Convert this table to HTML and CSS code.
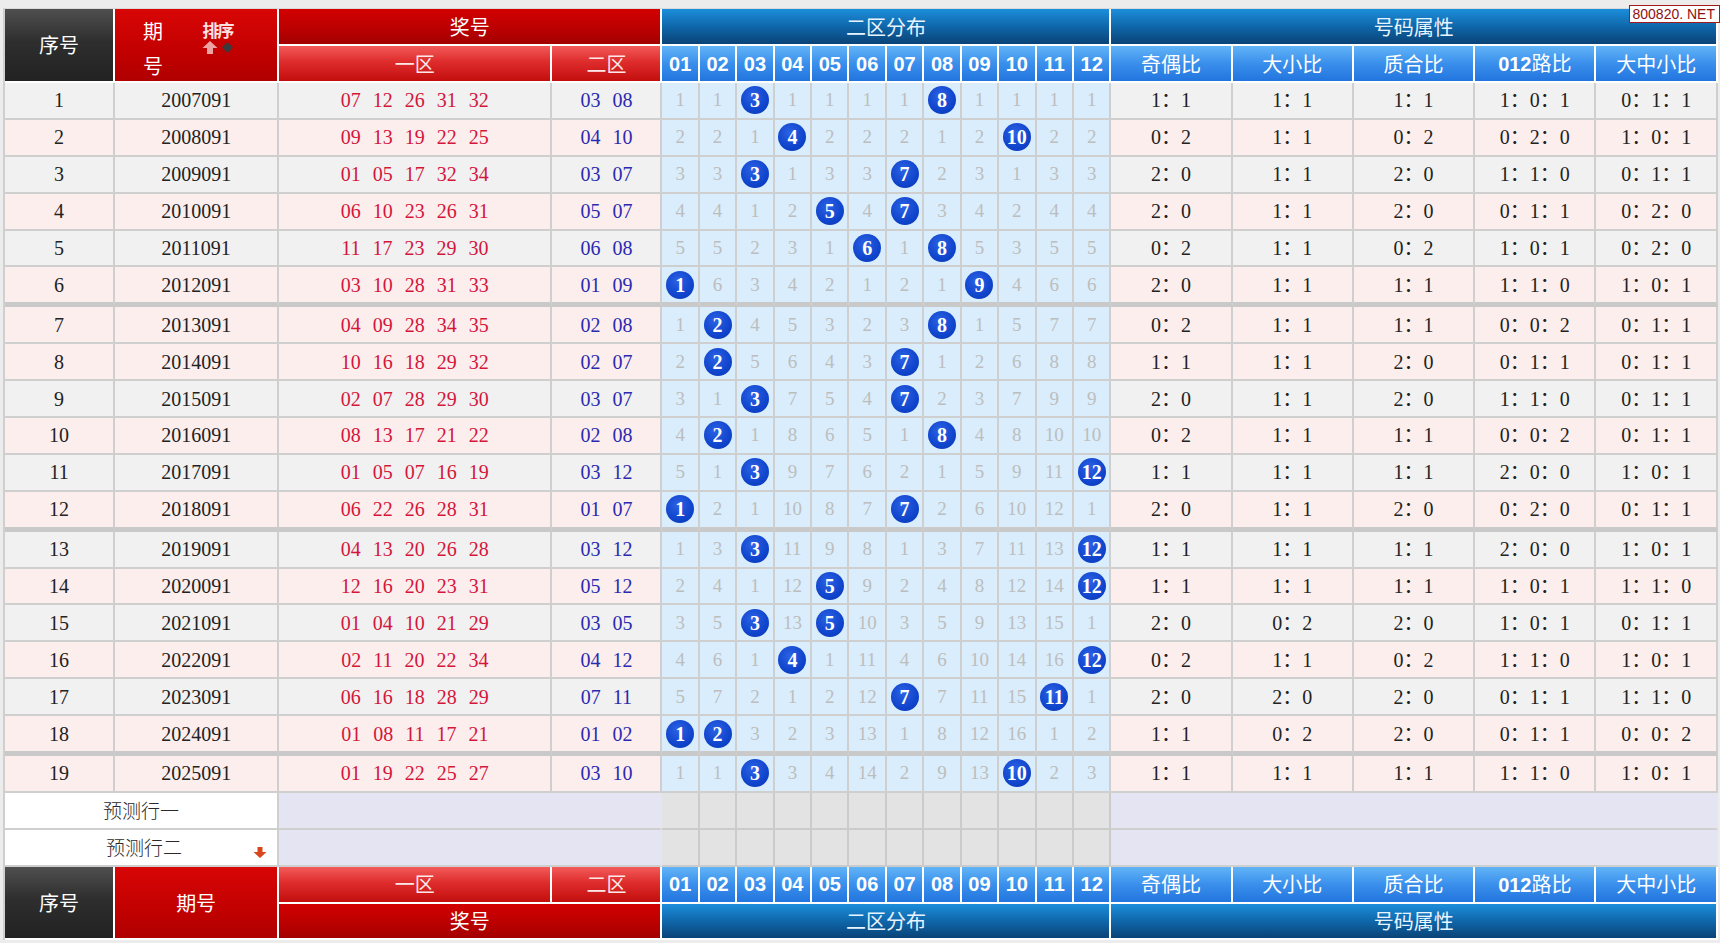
FILE: index.html
```html
<!DOCTYPE html>
<html lang="zh-CN">
<head>
<meta charset="utf-8">
<title>二区分布走势</title>
<link rel="stylesheet" href="styles.css">
</head>
<body>
<div class="badge">800820. NET</div>
<table class="chart">
<colgroup>
<col class="c-seq"><col class="c-issue"><col class="c-red"><col class="c-blue">
<col class="c-d"><col class="c-d"><col class="c-d"><col class="c-d"><col class="c-d"><col class="c-d"><col class="c-d"><col class="c-d"><col class="c-d"><col class="c-d"><col class="c-d"><col class="c-d">
<col class="c-a"><col class="c-a"><col class="c-a"><col class="c-a"><col class="c-a">
</colgroup>
<thead>
<tr>
<th rowspan="2" class="h-dark">序号</th>
<th rowspan="2" class="h-red"><div class="issue-in"><span class="qh">期<br>号</span><span class="sort"><b>排序</b><span class="arrows"><svg width="16" height="13" viewBox="0 0 16 13"><path d="M8 0 L15.5 7 H11 V13 H5 V7 H0.5 Z" fill="#eea3a3"/></svg><svg width="11" height="11" viewBox="0 0 10 10"><path d="M5 0 L10 5 L5 10 L0 5 Z" fill="#3b3b3b"/></svg></span></span></div></th>
<th colspan="2" class="h-dred">奖号</th>
<th colspan="12" class="h-dblue">二区分布</th>
<th colspan="5" class="h-dblue">号码属性</th>
</tr>
<tr>
<th class="h-lred">一区</th><th class="h-lred">二区</th>
<th class="h-lblue num">01</th><th class="h-lblue num">02</th><th class="h-lblue num">03</th><th class="h-lblue num">04</th><th class="h-lblue num">05</th><th class="h-lblue num">06</th><th class="h-lblue num">07</th><th class="h-lblue num">08</th><th class="h-lblue num">09</th><th class="h-lblue num">10</th><th class="h-lblue num">11</th><th class="h-lblue num">12</th>
<th class="h-lblue">奇偶比</th><th class="h-lblue">大小比</th><th class="h-lblue">质合比</th><th class="h-lblue"><span class="num">012</span>路比</th><th class="h-lblue">大中小比</th>
</tr>
</thead>
<tbody>
<tr class="g"><td>1</td><td>2007091</td><td class="rn">07 12 26 31 32</td><td class="bn">03 08</td>
<td class="m">1</td><td class="m">1</td><td class="m"><span class="ball">3</span></td><td class="m">1</td><td class="m">1</td><td class="m">1</td><td class="m">1</td><td class="m"><span class="ball">8</span></td><td class="m">1</td><td class="m">1</td><td class="m">1</td><td class="m">1</td>
<td>1：1</td><td>1：1</td><td>1：1</td><td>1：0：1</td><td>0：1：1</td></tr>
<tr class="p"><td>2</td><td>2008091</td><td class="rn">09 13 19 22 25</td><td class="bn">04 10</td>
<td class="m">2</td><td class="m">2</td><td class="m">1</td><td class="m"><span class="ball">4</span></td><td class="m">2</td><td class="m">2</td><td class="m">2</td><td class="m">1</td><td class="m">2</td><td class="m"><span class="ball">10</span></td><td class="m">2</td><td class="m">2</td>
<td>0：2</td><td>1：1</td><td>0：2</td><td>0：2：0</td><td>1：0：1</td></tr>
<tr class="g"><td>3</td><td>2009091</td><td class="rn">01 05 17 32 34</td><td class="bn">03 07</td>
<td class="m">3</td><td class="m">3</td><td class="m"><span class="ball">3</span></td><td class="m">1</td><td class="m">3</td><td class="m">3</td><td class="m"><span class="ball">7</span></td><td class="m">2</td><td class="m">3</td><td class="m">1</td><td class="m">3</td><td class="m">3</td>
<td>2：0</td><td>1：1</td><td>2：0</td><td>1：1：0</td><td>0：1：1</td></tr>
<tr class="p"><td>4</td><td>2010091</td><td class="rn">06 10 23 26 31</td><td class="bn">05 07</td>
<td class="m">4</td><td class="m">4</td><td class="m">1</td><td class="m">2</td><td class="m"><span class="ball">5</span></td><td class="m">4</td><td class="m"><span class="ball">7</span></td><td class="m">3</td><td class="m">4</td><td class="m">2</td><td class="m">4</td><td class="m">4</td>
<td>2：0</td><td>1：1</td><td>2：0</td><td>0：1：1</td><td>0：2：0</td></tr>
<tr class="g"><td>5</td><td>2011091</td><td class="rn">11 17 23 29 30</td><td class="bn">06 08</td>
<td class="m">5</td><td class="m">5</td><td class="m">2</td><td class="m">3</td><td class="m">1</td><td class="m"><span class="ball">6</span></td><td class="m">1</td><td class="m"><span class="ball">8</span></td><td class="m">5</td><td class="m">3</td><td class="m">5</td><td class="m">5</td>
<td>0：2</td><td>1：1</td><td>0：2</td><td>1：0：1</td><td>0：2：0</td></tr>
<tr class="p sep"><td>6</td><td>2012091</td><td class="rn">03 10 28 31 33</td><td class="bn">01 09</td>
<td class="m"><span class="ball">1</span></td><td class="m">6</td><td class="m">3</td><td class="m">4</td><td class="m">2</td><td class="m">1</td><td class="m">2</td><td class="m">1</td><td class="m"><span class="ball">9</span></td><td class="m">4</td><td class="m">6</td><td class="m">6</td>
<td>2：0</td><td>1：1</td><td>1：1</td><td>1：1：0</td><td>1：0：1</td></tr>
<tr class="p"><td>7</td><td>2013091</td><td class="rn">04 09 28 34 35</td><td class="bn">02 08</td>
<td class="m">1</td><td class="m"><span class="ball">2</span></td><td class="m">4</td><td class="m">5</td><td class="m">3</td><td class="m">2</td><td class="m">3</td><td class="m"><span class="ball">8</span></td><td class="m">1</td><td class="m">5</td><td class="m">7</td><td class="m">7</td>
<td>0：2</td><td>1：1</td><td>1：1</td><td>0：0：2</td><td>0：1：1</td></tr>
<tr class="p"><td>8</td><td>2014091</td><td class="rn">10 16 18 29 32</td><td class="bn">02 07</td>
<td class="m">2</td><td class="m"><span class="ball">2</span></td><td class="m">5</td><td class="m">6</td><td class="m">4</td><td class="m">3</td><td class="m"><span class="ball">7</span></td><td class="m">1</td><td class="m">2</td><td class="m">6</td><td class="m">8</td><td class="m">8</td>
<td>1：1</td><td>1：1</td><td>2：0</td><td>0：1：1</td><td>0：1：1</td></tr>
<tr class="g"><td>9</td><td>2015091</td><td class="rn">02 07 28 29 30</td><td class="bn">03 07</td>
<td class="m">3</td><td class="m">1</td><td class="m"><span class="ball">3</span></td><td class="m">7</td><td class="m">5</td><td class="m">4</td><td class="m"><span class="ball">7</span></td><td class="m">2</td><td class="m">3</td><td class="m">7</td><td class="m">9</td><td class="m">9</td>
<td>2：0</td><td>1：1</td><td>2：0</td><td>1：1：0</td><td>0：1：1</td></tr>
<tr class="p"><td>10</td><td>2016091</td><td class="rn">08 13 17 21 22</td><td class="bn">02 08</td>
<td class="m">4</td><td class="m"><span class="ball">2</span></td><td class="m">1</td><td class="m">8</td><td class="m">6</td><td class="m">5</td><td class="m">1</td><td class="m"><span class="ball">8</span></td><td class="m">4</td><td class="m">8</td><td class="m">10</td><td class="m">10</td>
<td>0：2</td><td>1：1</td><td>1：1</td><td>0：0：2</td><td>0：1：1</td></tr>
<tr class="g"><td>11</td><td>2017091</td><td class="rn">01 05 07 16 19</td><td class="bn">03 12</td>
<td class="m">5</td><td class="m">1</td><td class="m"><span class="ball">3</span></td><td class="m">9</td><td class="m">7</td><td class="m">6</td><td class="m">2</td><td class="m">1</td><td class="m">5</td><td class="m">9</td><td class="m">11</td><td class="m"><span class="ball">12</span></td>
<td>1：1</td><td>1：1</td><td>1：1</td><td>2：0：0</td><td>1：0：1</td></tr>
<tr class="p sep"><td>12</td><td>2018091</td><td class="rn">06 22 26 28 31</td><td class="bn">01 07</td>
<td class="m"><span class="ball">1</span></td><td class="m">2</td><td class="m">1</td><td class="m">10</td><td class="m">8</td><td class="m">7</td><td class="m"><span class="ball">7</span></td><td class="m">2</td><td class="m">6</td><td class="m">10</td><td class="m">12</td><td class="m">1</td>
<td>2：0</td><td>1：1</td><td>2：0</td><td>0：2：0</td><td>0：1：1</td></tr>
<tr class="g"><td>13</td><td>2019091</td><td class="rn">04 13 20 26 28</td><td class="bn">03 12</td>
<td class="m">1</td><td class="m">3</td><td class="m"><span class="ball">3</span></td><td class="m">11</td><td class="m">9</td><td class="m">8</td><td class="m">1</td><td class="m">3</td><td class="m">7</td><td class="m">11</td><td class="m">13</td><td class="m"><span class="ball">12</span></td>
<td>1：1</td><td>1：1</td><td>1：1</td><td>2：0：0</td><td>1：0：1</td></tr>
<tr class="p"><td>14</td><td>2020091</td><td class="rn">12 16 20 23 31</td><td class="bn">05 12</td>
<td class="m">2</td><td class="m">4</td><td class="m">1</td><td class="m">12</td><td class="m"><span class="ball">5</span></td><td class="m">9</td><td class="m">2</td><td class="m">4</td><td class="m">8</td><td class="m">12</td><td class="m">14</td><td class="m"><span class="ball">12</span></td>
<td>1：1</td><td>1：1</td><td>1：1</td><td>1：0：1</td><td>1：1：0</td></tr>
<tr class="g"><td>15</td><td>2021091</td><td class="rn">01 04 10 21 29</td><td class="bn">03 05</td>
<td class="m">3</td><td class="m">5</td><td class="m"><span class="ball">3</span></td><td class="m">13</td><td class="m"><span class="ball">5</span></td><td class="m">10</td><td class="m">3</td><td class="m">5</td><td class="m">9</td><td class="m">13</td><td class="m">15</td><td class="m">1</td>
<td>2：0</td><td>0：2</td><td>2：0</td><td>1：0：1</td><td>0：1：1</td></tr>
<tr class="p"><td>16</td><td>2022091</td><td class="rn">02 11 20 22 34</td><td class="bn">04 12</td>
<td class="m">4</td><td class="m">6</td><td class="m">1</td><td class="m"><span class="ball">4</span></td><td class="m">1</td><td class="m">11</td><td class="m">4</td><td class="m">6</td><td class="m">10</td><td class="m">14</td><td class="m">16</td><td class="m"><span class="ball">12</span></td>
<td>0：2</td><td>1：1</td><td>0：2</td><td>1：1：0</td><td>1：0：1</td></tr>
<tr class="g"><td>17</td><td>2023091</td><td class="rn">06 16 18 28 29</td><td class="bn">07 11</td>
<td class="m">5</td><td class="m">7</td><td class="m">2</td><td class="m">1</td><td class="m">2</td><td class="m">12</td><td class="m"><span class="ball">7</span></td><td class="m">7</td><td class="m">11</td><td class="m">15</td><td class="m"><span class="ball">11</span></td><td class="m">1</td>
<td>2：0</td><td>2：0</td><td>2：0</td><td>0：1：1</td><td>1：1：0</td></tr>
<tr class="p sep"><td>18</td><td>2024091</td><td class="rn">01 08 11 17 21</td><td class="bn">01 02</td>
<td class="m"><span class="ball">1</span></td><td class="m"><span class="ball">2</span></td><td class="m">3</td><td class="m">2</td><td class="m">3</td><td class="m">13</td><td class="m">1</td><td class="m">8</td><td class="m">12</td><td class="m">16</td><td class="m">1</td><td class="m">2</td>
<td>1：1</td><td>0：2</td><td>2：0</td><td>0：1：1</td><td>0：0：2</td></tr>
<tr class="p"><td>19</td><td>2025091</td><td class="rn">01 19 22 25 27</td><td class="bn">03 10</td>
<td class="m">1</td><td class="m">1</td><td class="m"><span class="ball">3</span></td><td class="m">3</td><td class="m">4</td><td class="m">14</td><td class="m">2</td><td class="m">9</td><td class="m">13</td><td class="m"><span class="ball">10</span></td><td class="m">2</td><td class="m">3</td>
<td>1：1</td><td>1：1</td><td>1：1</td><td>1：1：0</td><td>1：0：1</td></tr>
<tr class="pred-row"><td colspan="2" class="pred">预测行一</td><td colspan="2" class="lav"></td>
<td class="pg"></td><td class="pg"></td><td class="pg"></td><td class="pg"></td><td class="pg"></td><td class="pg"></td><td class="pg"></td><td class="pg"></td><td class="pg"></td><td class="pg"></td><td class="pg"></td><td class="pg"></td>
<td colspan="5" class="lav"></td></tr>
<tr class="pred-row"><td colspan="2" class="pred"><div class="pred-in">预测行二<svg class="down" width="14" height="11" viewBox="0 0 14 11"><path d="M4.5 0 H9.5 V5 H13.5 L7 11 L0.5 5 H4.5 Z" fill="#d9461c"/></svg></div></td><td colspan="2" class="lav"></td>
<td class="pg"></td><td class="pg"></td><td class="pg"></td><td class="pg"></td><td class="pg"></td><td class="pg"></td><td class="pg"></td><td class="pg"></td><td class="pg"></td><td class="pg"></td><td class="pg"></td><td class="pg"></td>
<td colspan="5" class="lav"></td></tr>
</tbody>
<tfoot>
<tr>
<th rowspan="2" class="h-dark">序号</th>
<th rowspan="2" class="h-red">期号</th>
<th class="h-lred">一区</th><th class="h-lred">二区</th>
<th class="h-lblue num">01</th><th class="h-lblue num">02</th><th class="h-lblue num">03</th><th class="h-lblue num">04</th><th class="h-lblue num">05</th><th class="h-lblue num">06</th><th class="h-lblue num">07</th><th class="h-lblue num">08</th><th class="h-lblue num">09</th><th class="h-lblue num">10</th><th class="h-lblue num">11</th><th class="h-lblue num">12</th>
<th class="h-lblue">奇偶比</th><th class="h-lblue">大小比</th><th class="h-lblue">质合比</th><th class="h-lblue"><span class="num">012</span>路比</th><th class="h-lblue">大中小比</th>
</tr>
<tr>
<th colspan="2" class="h-dred">奖号</th>
<th colspan="12" class="h-dblue">二区分布</th>
<th colspan="5" class="h-dblue">号码属性</th>
</tr>
</tfoot>
</table>
</body>
</html>
```
FILE: styles.css
```css
html, body {
  margin: 0;
}
body {
  background: #ececec;
  padding: 8px 2px 0 3px;
  font-family: "Liberation Serif", "Noto Sans CJK SC", serif;
  position: relative;
  height: 935px;
  overflow: hidden;
}
.badge {
  position: absolute;
  top: 5px;
  right: 0;
  background: #fff;
  border: 1px solid #a31a1a;
  color: #8e1010;
  font-family: "Liberation Sans Narrow", "Liberation Sans", sans-serif;
  font-size: 14px;
  line-height: 16px;
  padding: 0 4px 0 3px;
  z-index: 2;
}
.chart {
  border-collapse: separate;
  border-spacing: 0;
  table-layout: fixed;
  width: 1715px;
  border-left: 2px solid #cfcfcf;
  border-top: 1px solid #d9d9d9;
}
.c-seq { width: 110px; }
.c-issue { width: 164px; }
.c-red { width: 273px; }
.c-blue { width: 110px; }
.c-d { width: 37.4px; }
.c-a { width: 121.2px; }

.chart td, .chart th {
  border-right: 2px solid #cfcfcf;
  border-bottom: 2px solid #cfcfcf;
  padding: 0;
  text-align: center;
  vertical-align: middle;
  white-space: nowrap;
  overflow: hidden;
}
.chart tr { height: 36.9px; }
.chart tr.sep { height: 39.9px; }
.chart tr.sep td { border-bottom: 5px solid #c9c9c9; }

.chart th {
  border-color: #fff;
  font-family: "Noto Sans CJK SC", sans-serif;
  font-weight: normal;
  font-size: 20px;
  color: #fff;
  line-height: 24px;
}
.chart th.num, .chart th .num {
  font-family: "Liberation Sans", sans-serif;
  font-weight: bold;
  font-size: 20px;
}
.h-dark {
  background: linear-gradient(#4f4f4f, #2e2e2e 45%, #222);
  border-right-color: #fff;
}
.h-red {
  background: linear-gradient(#d80606, #c20000 60%, #b00000);
}
.h-dred {
  background: linear-gradient(#d20000, #b90000 60%, #a30000);
}
.h-lred {
  background: linear-gradient(#f35a5a, #de2c2c 45%, #c40e0e);
  color: #fde8e8 !important;
}
.h-dblue {
  background: linear-gradient(#1c8edb, #0f67aa 50%, #0a4377);
  color: #e8f4ff !important;
}
.h-lblue {
  background: linear-gradient(#62b4f6, #3a8fec 50%, #2275de);
}

.issue-in {
  display: flex;
  align-items: flex-start;
  padding-left: 27px;
  gap: 38px;
  height: 72px;
  box-sizing: border-box;
  padding-top: 4px;
}
.qh {
  display: block;
  line-height: 35px;
  width: 22px;
}
.sort {
  display: flex;
  flex-direction: column;
  align-items: center;
  padding-top: 8px;
}
.sort b {
  font-size: 17px;
  line-height: 17px;
  font-weight: bold;
  color: #fde1e1;
  letter-spacing: -2px;
}
.arrows {
  display: flex;
  align-items: center;
  gap: 4px;
  margin-top: 3px;
}

.chart td {
  font-size: 20px;
  color: #222;
  line-height: 24px;
}
.g td { background: #f1f1f1; }
.p td { background: #fdeeee; }
.chart td.rn { color: #d3163a; word-spacing: 7px; }
.chart td.bn { color: #2a2ab0; word-spacing: 7px; }
.chart td.m {
  background: #d9edfc;
  color: #bdbdbd;
  font-size: 19px;
}
.ball {
  display: inline-block;
  width: 28px;
  height: 28px;
  border-radius: 50%;
  background: radial-gradient(circle at 42% 35%, #2c62e4, #0f44cc 60%, #0a37b0);
  color: #fff;
  font-weight: bold;
  font-size: 20px;
  line-height: 28px;
  vertical-align: middle;
}
.chart td.pred {
  background: #fff;
  color: #2a2a2a;
  font-family: "Noto Sans CJK SC", sans-serif;
  font-size: 19px;
  font-weight: 300;
}
.pred-in {
  position: relative;
  padding-left: 6px;
}
.down {
  position: absolute;
  right: 10px;
  top: 12px;
}
.chart td.lav {
  background: #e4e4f3;
  border-right-color: #e4e4f3;
}
.chart td.pg {
  background: #e3e3e3;
  border-color: #cbcbcb;
}
tfoot th { border-color: #fff; }
```
